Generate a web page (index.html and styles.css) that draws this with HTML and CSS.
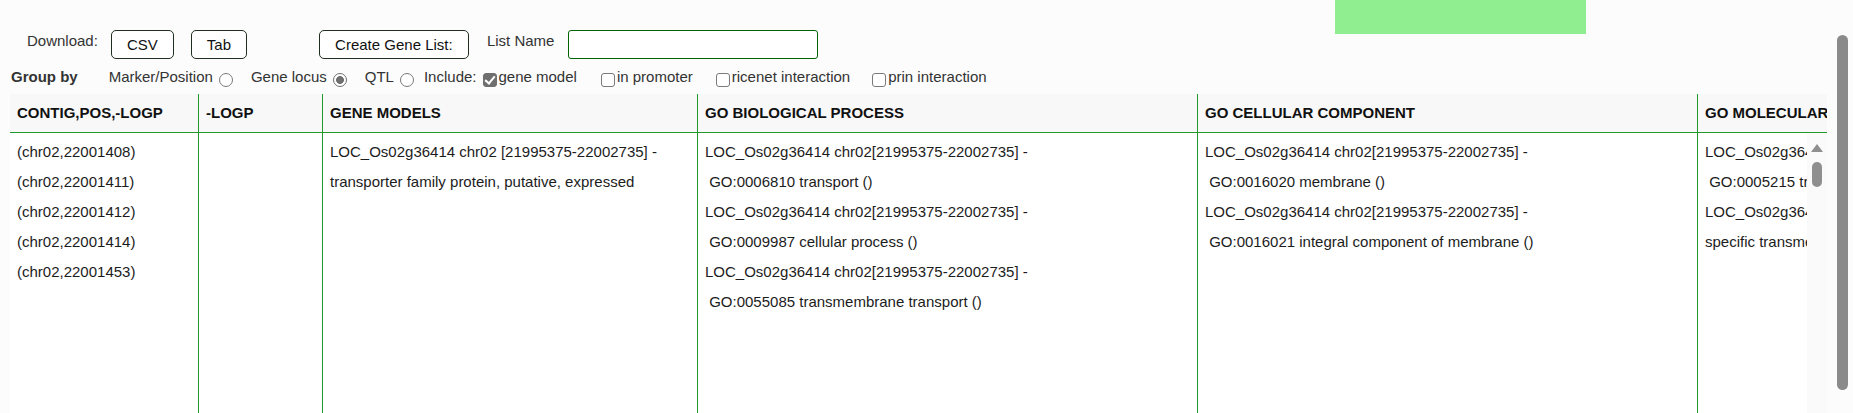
FILE: index.html
```html
<!DOCTYPE html>
<html>
<head>
<meta charset="utf-8">
<link rel="stylesheet" href="styles.css">
</head>
<body>
<div class="notice"></div>

<div class="toolbar">
  <span class="lbl dl">Download:</span>
  <button class="btn csv">CSV</button>
  <button class="btn tab">Tab</button>
  <button class="btn create">Create Gene List:</button>
  <span class="lbl listname">List Name</span>
  <input class="listinput" type="text">
</div>

<div class="options">
  <span class="groupby">Group by</span>
  <label class="opt o-marker">Marker/Position<input class="radio" type="radio" name="grp"></label>
  <label class="opt o-locus">Gene locus<input class="radio" type="radio" name="grp" checked></label>
  <label class="opt o-qtl">QTL<input class="radio" type="radio" name="grp"></label>
  <span class="opt o-include">Include:</span>
  <label class="chk c-gene"><input class="box" type="checkbox" checked>gene model</label>
  <label class="chk c-prom"><input class="box" type="checkbox">in promoter</label>
  <label class="chk c-rice"><input class="box" type="checkbox">ricenet interaction</label>
  <label class="chk c-prin"><input class="box" type="checkbox">prin interaction</label>
</div>

<div class="table">
  <div class="thead">
    <div class="th w1">CONTIG,POS,-LOGP</div>
    <div class="th w2">-LOGP</div>
    <div class="th w3">GENE MODELS</div>
    <div class="th w4">GO BIOLOGICAL PROCESS</div>
    <div class="th w5">GO CELLULAR COMPONENT</div>
    <div class="th w6">GO MOLECULAR FUNCTION</div>
  </div>
  <div class="tbody">
    <div class="cols">
      <div class="td w1">
        <div class="ln">(chr02,22001408)</div>
        <div class="ln">(chr02,22001411)</div>
        <div class="ln">(chr02,22001412)</div>
        <div class="ln">(chr02,22001414)</div>
        <div class="ln">(chr02,22001453)</div>
      </div>
      <div class="td w2"></div>
      <div class="td w3">
        <div class="ln">LOC_Os02g36414 chr02 [21995375-22002735] -</div>
        <div class="ln">transporter family protein, putative, expressed</div>
      </div>
      <div class="td w4">
        <div class="ln">LOC_Os02g36414 chr02[21995375-22002735] -</div>
        <div class="ln">&nbsp;GO:0006810 transport ()</div>
        <div class="ln">LOC_Os02g36414 chr02[21995375-22002735] -</div>
        <div class="ln">&nbsp;GO:0009987 cellular process ()</div>
        <div class="ln">LOC_Os02g36414 chr02[21995375-22002735] -</div>
        <div class="ln">&nbsp;GO:0055085 transmembrane transport ()</div>
      </div>
      <div class="td w5">
        <div class="ln">LOC_Os02g36414 chr02[21995375-22002735] -</div>
        <div class="ln">&nbsp;GO:0016020 membrane ()</div>
        <div class="ln">LOC_Os02g36414 chr02[21995375-22002735] -</div>
        <div class="ln">&nbsp;GO:0016021 integral component of membrane ()</div>
      </div>
      <div class="td w6">
        <div class="ln">LOC_Os02g36414 chr02[21995375-22002735] -</div>
        <div class="ln">&nbsp;GO:0005215 transporter activity ()</div>
        <div class="ln">LOC_Os02g36414 chr02[21995375-22002735] - GO:0022891 substrate-</div>
        <div class="ln">specific transmembrane transporter activity ()</div>
      </div>
    </div>
    <div class="vscroll">
      <span class="arrow"></span>
      <span class="thumb"></span>
    </div>
  </div>
</div>

<div class="pagescroll"></div>
</body>
</html>
```
FILE: styles.css
```css
html, body {
  margin: 0;
  padding: 0;
  height: 100%;
  overflow: hidden;
}
body {
  background: #fcfcfc;
  font-family: "Liberation Sans", Arial, sans-serif;
  font-size: 15px;
  color: #222;
  position: relative;
}

.notice {
  position: absolute;
  top: 0;
  left: 1335px;
  width: 251px;
  height: 34px;
  background: #90ee90;
}

/* toolbar row */
.toolbar {
  display: flex;
  align-items: flex-start;
  padding-top: 30px;
  height: 29px;
}
.lbl {
  color: #333;
  line-height: 17px;
  margin-top: 2px;
  white-space: nowrap;
}
.dl { margin-left: 27px; }
.btn {
  font-family: "Liberation Sans", Arial, sans-serif;
  font-size: 15px;
  color: #111;
  background: #fff;
  border: 1px solid #1f2f1f;
  border-radius: 5px;
  height: 29px;
  padding: 0;
  box-sizing: border-box;
}
.csv { margin-left: 13px; width: 63px; }
.tab { margin-left: 17px; width: 56px; }
.create { margin-left: 72px; width: 150px; }
.listname { margin-left: 18px; }
.listinput {
  margin: 0 0 0 14px;
  width: 250px;
  height: 29px;
  box-sizing: border-box;
  border: 1px solid #006400;
  border-radius: 3px;
  background: #fff;
  padding: 0 4px;
}

/* options row */
.options {
  display: flex;
  align-items: flex-start;
  margin-top: 9px;
  height: 18px;
  line-height: 18px;
  color: #333;
  white-space: nowrap;
}
.groupby {
  font-weight: bold;
  margin-left: 11px;
}
.opt, .chk {
  display: flex;
  align-items: flex-start;
}
.o-marker { margin-left: 31px; }
.o-locus { margin-left: 18px; }
.o-qtl { margin-left: 18px; }
.o-include { margin-left: 10px; }
.c-gene { margin-left: 6px; }
.c-prom { margin-left: 24px; }
.c-rice { margin-left: 23px; }
.c-prin { margin-left: 22px; }

.radio {
  -webkit-appearance: none;
  appearance: none;
  box-sizing: border-box;
  width: 14px;
  height: 14px;
  margin: 5px 0 0 6px;
  border: 1px solid #7a7a7a;
  border-radius: 50%;
  background: #fff;
}
.radio:checked {
  border-color: #6f6f6f;
  background: radial-gradient(circle, #6f6f6f 0 3.6px, #fff 4.2px);
}
.box {
  -webkit-appearance: none;
  appearance: none;
  box-sizing: border-box;
  position: relative;
  width: 14px;
  height: 14px;
  margin: 5px 2px 0 0;
  border: 1px solid #7a7a7a;
  border-radius: 3px;
  background: #fff;
}
.box:checked {
  background: #6f6f6f;
  border-color: #6f6f6f;
}
.box:checked::after {
  content: "";
  position: absolute;
  left: 3px;
  top: 0px;
  width: 4px;
  height: 8px;
  border-right: 2px solid #fff;
  border-bottom: 2px solid #fff;
  transform: rotate(40deg);
}

/* table */
.table {
  margin: 8px 0 0 10px;
  width: 1817px;
  overflow: hidden;
}
.thead {
  display: flex;
  height: 38px;
  background: #f8f8f8;
  border-bottom: 1px solid #23992b;
  overflow: hidden;
}
.th {
  flex-shrink: 0;
  box-sizing: border-box;
  border-right: 1px solid #23992b;
  padding-left: 7px;
  line-height: 38px;
  font-weight: bold;
  color: #111;
  white-space: nowrap;
}
.tbody {
  display: flex;
  height: 290px;
  background: #fff;
}
.cols {
  display: flex;
  width: 1797px;
  overflow: hidden;
}
.td {
  flex-shrink: 0;
  box-sizing: border-box;
  border-right: 1px solid #23992b;
  padding: 4px 0 0 7px;
  white-space: nowrap;
  overflow: hidden;
}
.ln {
  line-height: 30px;
  color: #1c1c1c;
}
.w1 { width: 189px; }
.w2 { width: 124px; }
.w3 { width: 375px; }
.w4 { width: 500px; }
.w5 { width: 500px; }
.w6 { width: 620px; }

.vscroll {
  width: 20px;
  flex-shrink: 0;
  background: #fafafa;
  display: flex;
  flex-direction: column;
  align-items: center;
}
.arrow {
  margin-top: 11px;
  width: 0;
  height: 0;
  border-left: 6px solid transparent;
  border-right: 6px solid transparent;
  border-bottom: 8px solid #8f8f8f;
}
.thumb {
  margin-top: 10px;
  width: 10px;
  height: 25px;
  border-radius: 5px;
  background: #8f8f8f;
}

.pagescroll {
  position: absolute;
  top: 35px;
  right: 5px;
  width: 11px;
  height: 355px;
  border-radius: 6px;
  background: #8a8a8a;
}
```
